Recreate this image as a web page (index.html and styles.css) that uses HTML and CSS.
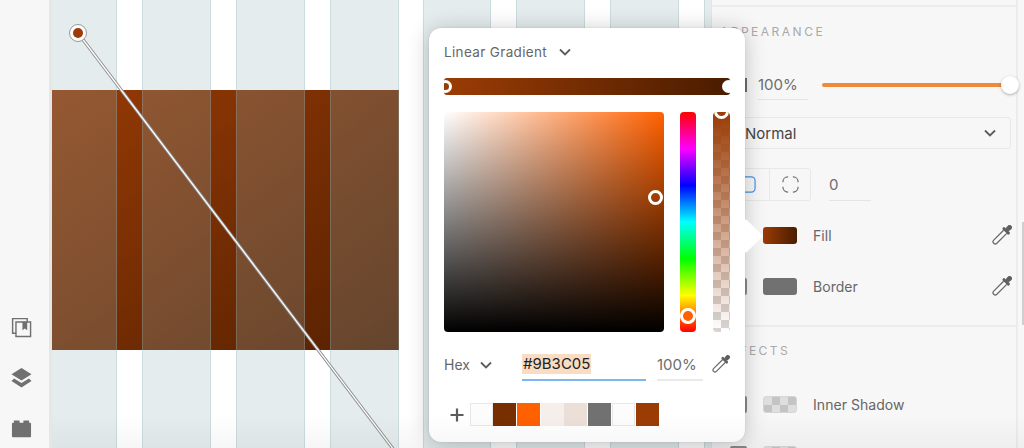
FILE: index.html
```html
<!DOCTYPE html>
<html lang="en">
<head>
  <meta charset="UTF-8" />
  <title>Fill editor</title>
  <link rel="stylesheet" href="styles.css">
</head>
<body>
  <div class="app">
    <nav class="sidebar">
      <svg class="side-icon" viewBox="0 0 22 22">
        <path d="M5 17H1.7V1.7H17V5" fill="none" stroke="#707070" stroke-width="1.5"/>
        <path d="M5.2 5.2H20.5V20.5H5.2Z" fill="none" stroke="#707070" stroke-width="1.5"/>
        <path d="M12 5H17V14L14.5 12L12 14Z" fill="#707070"/>
      </svg>
      <svg class="side-icon" viewBox="0 0 22 22">
        <path d="M11 0L21.5 6.5L11 13L0.5 6.5Z" fill="#707070"/>
        <path d="M3.2 11L11 15.8L18.8 11L21.5 13.5L11 20.5L0.5 13.5Z" fill="#707070"/>
      </svg>
      <svg class="side-icon" viewBox="0 0 22 22">
        <path d="M3 1.5H9V4H13V1.5H19V4H20A1 1 0 0 1 21 5V18A1 1 0 0 1 20 19H2A1 1 0 0 1 1 18V5A1 1 0 0 1 2 4H3Z" fill="#707070"/>
      </svg>
    </nav>

    <main class="canvas">
      <div class="fill-rect"></div>
      <div class="columns">
        <div class="col col-first"></div>
        <div class="col"></div>
        <div class="col"></div>
        <div class="col"></div>
        <div class="col col-shift"></div>
        <div class="col"></div>
        <div class="col"></div>
        <div class="col"></div>
      </div>
      <svg class="gradient-line" viewBox="0 0 400 448">
        <line x1="26" y1="33" x2="345" y2="454" stroke="#8f8f8f" stroke-width="3.2"/>
        <line x1="26" y1="33" x2="345" y2="454" stroke="#fff" stroke-width="1.3"/>
        <circle cx="26" cy="33" r="8.5" fill="#fff" stroke="#999" stroke-width="1"/>
        <circle cx="26" cy="33" r="5" fill="#9b3c05"/>
      </svg>
    </main>

    <aside class="panel">
      <div class="panel-body">
        <section class="section section-top"></section>

        <section class="section section-appearance">
          <h3 class="section-title">APPEARANCE</h3>
          <div class="opacity-row">
            <span class="opacity-icon"></span>
            <span class="num-field opacity-field">100%</span>
            <div class="slider"><span class="slider-thumb"></span></div>
          </div>
          <div class="select">
            <span>Normal</span>
            <svg class="chevron" viewBox="0 0 12 8"><path d="M1 1.5L6 6.5L11 1.5"/></svg>
          </div>
          <div class="radius-row">
            <div class="segments">
              <div class="segment segment-on">
                <svg class="corner-icon" viewBox="0 0 18 18"><rect x="1" y="1" width="16" height="16" rx="4" fill="none" stroke="#4a90e2" stroke-width="1.3"/></svg>
              </div>
              <div class="segment">
                <svg class="corner-icon" viewBox="0 0 18 18"><path d="M1 6.5V6A5 5 0 0 1 6 1H6.5M11.5 1H12A5 5 0 0 1 17 6V6.5M17 11.5V12A5 5 0 0 1 12 17H11.5M6.5 17H6A5 5 0 0 1 1 12V11.5" fill="none" stroke="#6e6e6e" stroke-width="1.3"/></svg>
              </div>
            </div>
            <span class="num-field radius-field">0</span>
          </div>
          <div class="style-row">
            <span class="check"></span>
            <span class="swatch swatch-fill"></span>
            <span class="style-label">Fill</span>
            <svg class="dropper" viewBox="0 0 20 20"><use href="#dropper"/></svg>
          </div>
          <div class="style-row">
            <span class="check"></span>
            <span class="swatch swatch-border"></span>
            <span class="style-label">Border</span>
            <svg class="dropper" viewBox="0 0 20 20"><use href="#dropper"/></svg>
          </div>
        </section>

        <section class="section section-effects">
          <h3 class="section-title">EFFECTS</h3>
          <div class="style-row effect-row">
            <span class="check"></span>
            <span class="swatch swatch-empty"></span>
            <span class="style-label">Inner Shadow</span>
          </div>
          <div class="style-row effect-row">
            <span class="check"></span>
            <span class="swatch swatch-empty"></span>
          </div>
        </section>
      </div>
      <div class="scrollbar"></div>
    </aside>

    <div class="popup">
      <span class="popup-arrow"></span>
      <div class="type-select">
        <span>Linear Gradient</span>
        <svg class="chevron" viewBox="0 0 12 8"><path d="M1 1.5L6 6.5L11 1.5"/></svg>
      </div>
      <div class="gradient-bar">
        <span class="stop stop-left"></span>
        <span class="stop stop-right"></span>
      </div>
      <div class="picker">
        <div class="sv-box"><span class="knob sv-knob"></span></div>
        <div class="hue-strip"><span class="knob hue-knob"></span></div>
        <div class="alpha-strip"><span class="knob alpha-knob"></span></div>
      </div>
      <div class="color-row">
        <span class="mode">Hex</span>
        <svg class="chevron" viewBox="0 0 12 8"><path d="M1 1.5L6 6.5L11 1.5"/></svg>
        <div class="hex-field"><span class="hex-value">#9B3C05</span></div>
        <span class="num-field alpha-field">100%</span>
        <svg class="dropper" viewBox="0 0 20 20"><use href="#dropper"/></svg>
      </div>
      <div class="swatch-row">
        <svg class="plus" viewBox="0 0 14 14"><path d="M7 0.5V13.5M0.5 7H13.5"/></svg>
        <span class="chip chip-white"></span>
        <span class="chip chip-a"></span>
        <span class="chip chip-b"></span>
        <span class="chip chip-c"></span>
        <span class="chip chip-d"></span>
        <span class="chip chip-e"></span>
        <span class="chip chip-white"></span>
        <span class="chip chip-f"></span>
      </div>
    </div>

    <div class="bottom-shade"></div>
  </div>

  <svg class="defs" width="0" height="0">
    <symbol id="dropper" viewBox="0 0 20 20">
      <g transform="rotate(45 10 10)">
        <rect x="7.6" y="-3" width="4.8" height="6" rx="2" fill="#5f5f5f"/>
        <rect x="5.4" y="2.6" width="9.2" height="3" rx="1.4" fill="#5f5f5f"/>
        <path d="M7.8 5.5V19.5A2.2 2.2 0 0 0 12.2 19.5V5.5" fill="#fff" fill-opacity=".5" stroke="#6a6a6a" stroke-width="1.3"/>
      </g>
    </symbol>
  </svg>
</body>
</html>
```

FILE: styles.css
```css
* {
  box-sizing: border-box;
}

body {
  margin: 0;
  font-family: Inter, "Open Sans", sans-serif;
  background-color: #fff;
}

.defs {
  position: absolute;
}

.app {
  position: relative;
  display: flex;
  width: 1024px;
  height: 448px;
  overflow: hidden;
}

/* left rail */
.sidebar {
  flex: 0 0 52px;
  display: flex;
  flex-direction: column;
  align-items: center;
  justify-content: flex-end;
  gap: 30px;
  padding: 0 7px 8px 0;
  background-color: #f7f7f7;
  border-right: 3px solid #e6e6e6;
}

.side-icon {
  display: block;
  width: 21px;
  height: 21px;
}

/* artboard */
.canvas {
  position: relative;
  flex: 0 0 659px;
  overflow: hidden;
  background-color: #fff;
}

.fill-rect {
  position: absolute;
  left: 0;
  top: 90px;
  width: 347px;
  height: 260px;
  background: linear-gradient(143deg, #9b3c05 -30px, #4a1c00 491px);
}

.columns {
  position: relative;
  display: grid;
  grid-template-columns: 65px 69px 69px 69px 67px 69px 69px 69px;
  column-gap: 25px;
  height: 100%;
}

.col {
  background-color: rgba(148, 180, 184, 0.25);
  border-left: 1px solid rgba(148, 180, 184, 0.3);
  border-right: 1px solid rgba(148, 180, 184, 0.3);
}

.col-first {
  border-left: none;
}

.col-shift {
  margin-left: -1px;
}

.gradient-line {
  position: absolute;
  left: 0;
  top: 0;
  width: 400px;
  height: 448px;
}

/* right panel */
.panel {
  position: relative;
  flex: 1;
  background-color: #f7f7f7;
  border-left: 1px solid #e4e4e4;
}

.panel-body {
  width: 306px;
  height: 100%;
  border-right: 2px solid #ececec;
}

.section {
  padding-left: 8px;
  border-bottom: 2px solid #ececec;
}

.section-top {
  height: 7px;
}

.section-appearance {
  height: 320px;
  padding-top: 17px;
}

.section-effects {
  padding-top: 16px;
  border-bottom: none;
}

.section-title {
  margin: 0;
  font-size: 12px;
  line-height: 16px;
  font-weight: 400;
  letter-spacing: 2.5px;
  color: #a9a9a9;
}

.num-field {
  display: block;
  font-size: 15px;
  line-height: 28px;
  color: #6d6d6d;
  border-bottom: 1px solid #e4e4e4;
}

.opacity-row {
  display: flex;
  align-items: center;
  margin-top: 30px;
  height: 30px;
}

.opacity-icon {
  width: 17px;
  height: 14px;
  margin-left: 10px;
  background-color: #707070;
}

.opacity-field {
  width: 50px;
  margin-left: 11px;
}

.slider {
  position: relative;
  width: 188px;
  height: 4px;
  margin-left: 14px;
  background-color: #ee8a3a;
  border-radius: 2px;
}

.slider-thumb {
  position: absolute;
  right: -9px;
  top: -7px;
  width: 18px;
  height: 18px;
  background-color: #fff;
  border-radius: 50%;
  box-shadow: 0 1px 3px rgba(0, 0, 0, 0.3);
}

.select {
  display: flex;
  align-items: center;
  justify-content: space-between;
  width: 291px;
  height: 32px;
  margin-top: 17px;
  padding: 0 14px 0 24px;
  font-size: 15px;
  color: #444;
  border: 1px solid #e8e8e8;
  border-radius: 3px;
}

.chevron {
  display: block;
  flex: none;
  width: 12px;
  height: 8px;
  fill: none;
  stroke: #5c5c5c;
  stroke-width: 1.8;
}

.radius-row {
  display: flex;
  align-items: flex-start;
  margin-top: 19px;
}

.segments {
  display: flex;
  margin-left: 5px;
  height: 33px;
  border: 1px solid #e8e8e8;
  border-radius: 3px;
}

.segment {
  display: flex;
  align-items: center;
  justify-content: center;
  width: 40px;
}

.segment-on {
  width: 44px;
  border-right: 1px solid #e8e8e8;
}

.corner-icon {
  display: block;
  width: 17px;
  height: 17px;
}

.radius-field {
  width: 42px;
  height: 33px;
  margin-left: 18px;
  line-height: 33px;
  font-size: 15px;
}

.style-row {
  display: flex;
  align-items: center;
  height: 34px;
  margin-top: 17px;
  padding-left: 10px;
}

.check {
  width: 17px;
  height: 17px;
  border: 2px solid #8c8c8c;
  border-radius: 2px;
}

.swatch {
  width: 34px;
  height: 17px;
  margin-left: 16px;
  border-radius: 3px;
}

.swatch-fill {
  background: linear-gradient(90deg, #9b3c05, #4a1c00);
}

.swatch-border {
  background-color: #717171;
}

.swatch-empty {
  border: 1px solid #d6d6d6;
  background: repeating-conic-gradient(#c4c4c4 0 25%, #dedede 0 50%) 0 0 / 16px 16px;
}

.style-label {
  flex: 1;
  margin-left: 16px;
  font-size: 14px;
  letter-spacing: 0.05px;
  color: #666;
}

.dropper {
  display: block;
  flex: none;
  width: 20px;
  height: 20px;
  margin-right: 4px;
}

.section-effects .section-title + .effect-row {
  margin-top: 28px;
}

.effect-row + .effect-row {
  margin-top: 16px;
}

.scrollbar {
  position: absolute;
  right: 0;
  top: 222px;
  width: 2px;
  height: 103px;
  background-color: #cfcfcf;
}

/* colour popup */
.popup {
  position: absolute;
  left: 429px;
  top: 28px;
  width: 316px;
  height: 414px;
  padding: 14px 15px 16px;
  background-color: #fff;
  border-radius: 12px;
  box-shadow: 0 2px 22px rgba(0, 0, 0, 0.22), 0 0 2px rgba(0, 0, 0, 0.12);
}

.popup-arrow {
  position: absolute;
  right: -13px;
  top: 196px;
  width: 24px;
  height: 24px;
  background-color: #fff;
  transform: rotate(45deg);
  border-radius: 1px;
}

.type-select {
  position: relative;
  display: flex;
  align-items: center;
  gap: 12px;
  height: 20px;
  font-size: 13.5px;
  letter-spacing: 0.35px;
  color: #666;
}

.gradient-bar {
  position: relative;
  height: 17px;
  margin-top: 16px;
  overflow: hidden;
  border-radius: 3px;
  background: linear-gradient(90deg, #9b3c05, #4a1c00);
}

.stop {
  position: absolute;
  top: 2px;
  width: 13px;
  height: 13px;
  border-radius: 50%;
  border: 3px solid #fff;
}

.stop-left {
  left: -5px;
}

.stop-right {
  right: -5px;
  background-color: #fff;
}

.picker {
  position: relative;
  display: grid;
  grid-template-columns: 220px 16px 18px;
  column-gap: 16px;
  height: 220px;
  margin-top: 17px;
}

.sv-box {
  position: relative;
  border-radius: 4px;
  background: linear-gradient(transparent, #000), linear-gradient(90deg, #fff, #ff6000);
}

.hue-strip {
  position: relative;
  border-radius: 4px;
  background: linear-gradient(#f00, #f0f, #00f, #0ff, #0f0, #ff0, #f00);
}

.alpha-strip {
  position: relative;
  overflow: hidden;
  margin-left: 1px;
  border-radius: 4px;
  background: linear-gradient(#9b3c05, transparent), repeating-conic-gradient(#d6d6d6 0 25%, #fff 0 50%) 0 0 / 16px 16px;
}

.knob {
  position: absolute;
  width: 15px;
  height: 15px;
  border: 3px solid #fff;
  border-radius: 50%;
}

.sv-knob {
  left: 204px;
  top: 78px;
}

.hue-knob {
  left: 0;
  top: 196px;
  width: 16px;
  height: 16px;
  background-color: #ff6000;
}

.alpha-knob {
  left: 1px;
  top: -8px;
}

.color-row {
  position: relative;
  display: flex;
  align-items: flex-start;
  height: 29px;
  margin-top: 20px;
  font-size: 14px;
  color: #666;
}

.mode {
  flex: none;
  line-height: 26px;
  width: 36px;
}

.color-row .chevron {
  margin-top: 9px;
}

.hex-field {
  flex: none;
  width: 124px;
  height: 29px;
  margin-left: 30px;
  padding-top: 2px;
  border-bottom: 2px solid #7ab8ef;
}

.hex-value {
  display: inline-block;
  padding: 0 1px;
  font-size: 15px;
  line-height: 20px;
  color: #222;
  background-color: #f8dcc4;
}

.alpha-field {
  flex: none;
  width: 46px;
  height: 29px;
  margin-left: 11px;
  line-height: 26px;
  border-bottom: 2px solid #eaeaea;
}

.color-row .dropper {
  width: 18px;
  height: 18px;
  margin: 3px 0 0 9px;
}

.swatch-row {
  display: flex;
  align-items: center;
  gap: 0.7px;
  margin-top: 22px;
}

.plus {
  display: block;
  flex: none;
  width: 14px;
  height: 14px;
  margin: 0 5px 0 6px;
  fill: none;
  stroke: #5c5c5c;
  stroke-width: 2.2;
}

.chip {
  width: 23px;
  height: 23px;
}

.chip-white {
  background-color: #fcfcfc;
  border: 1px solid #e8e8e8;
}

.chip-a {
  background-color: #772e00;
}

.chip-b {
  background-color: #ff6000;
}

.chip-c {
  background-color: #f5eeea;
}

.chip-d {
  background-color: #ecdfd8;
}

.chip-e {
  background-color: #717171;
}

.chip-f {
  background-color: #9b3c05;
}

/* slight darkening along the lower edge of the shot */
.bottom-shade {
  position: absolute;
  left: 52px;
  right: 0;
  bottom: 0;
  height: 34px;
  pointer-events: none;
  background: linear-gradient(transparent, rgba(0, 0, 0, 0.035));
}
```
